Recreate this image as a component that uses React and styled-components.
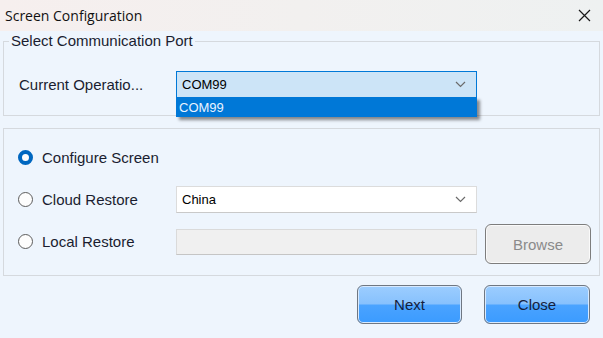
import React from 'react'
import styled, { createGlobalStyle } from 'styled-components'

const GlobalStyle = createGlobalStyle`
    html, body {
        margin: 0;
        padding: 0;
        width: 603px;
        height: 338px;
        overflow: hidden;
        background: #eef5fd;
    }
    * {
        box-sizing: border-box;
    }
`;

const Window = styled.div`
    width: 603px;
    height: 338px;
    display: flex;
    flex-direction: column;
    background: #eef5fd;
    font-family: "Liberation Sans", Arial, sans-serif;
    color: #1a1d30;
`;

const TitleBar = styled.div`
    height: 31px;
    flex: 0 0 31px;
    display: flex;
    align-items: center;
    justify-content: space-between;
    padding: 0 12px 0 5px;
    background: linear-gradient(90deg, #f6efee 0%, #f2f0ef 50%, #eef1f1 100%);
    font-family: "Segoe UI", "Open Sans", "Liberation Sans", sans-serif;
    font-size: 14px;
    color: #111;
`;

const CloseX = styled.svg`
    width: 13px;
    height: 13px;
`;

const Body = styled.div`
    flex: 1;
    display: flex;
    flex-direction: column;
    padding: 1px 3px 0 3px;
`;

const Group = styled.fieldset`
    margin: ${p => p.$top}px 0 0 0;
    padding: ${p => p.$pad};
    border: 1px solid #d5d9de;
    border-radius: 0;
    display: flex;
    flex-direction: column;
    gap: ${p => p.$gap || 0}px;
    position: relative;
`;

const Legend = styled.legend`
    padding: 0 2px;
    margin-left: 0;
    font-size: 15px;
    line-height: 18px;
    color: #1a1d30;
`;

const Row = styled.div`
    display: flex;
    align-items: center;
    height: 27px;
`;

const Label = styled.div`
    width: ${p => p.$w}px;
    font-size: 15px;
    white-space: nowrap;
`;

const RadioLabel = styled.label`
    width: 158px;
    display: flex;
    align-items: center;
    gap: 9px;
    font-size: 15px;
`;

const Radio = styled.span`
    width: 15px;
    height: 15px;
    border-radius: 50%;
    flex: 0 0 15px;
    border: ${p => (p.$on ? '4px solid #0067c0' : '1px solid #5c5c5c')};
    background: #fdfdfd;
`;

const ComboBox = styled.div`
    position: relative;
    width: 301px;
    height: 27px;
    display: flex;
    align-items: center;
    justify-content: space-between;
    padding: 0 10px 0 5px;
    font-size: 13px;
    color: #000;
    background: ${p => (p.$focus ? '#cce4f7' : '#ffffff')};
    border: 1px solid ${p => (p.$focus ? '#0078d7' : '#dcdcdc')};
    border-bottom-color: ${p => (p.$focus ? '#0078d7' : '#c9c9c9')};
`;

const Chevron = styled.svg`
    width: 11px;
    height: 7px;
`;

const DropList = styled.div`
    position: absolute;
    left: -1px;
    top: 25px;
    width: 301px;
    height: 20px;
    display: flex;
    align-items: center;
    padding-left: 3px;
    background: #0078d7;
    color: #e8f3ff;
    font-size: 13px;
    box-shadow: 3px 3px 3px rgba(0, 0, 0, 0.45);
    z-index: 2;
`;

const TextField = styled.div`
    width: 301px;
    height: 26px;
    background: #f0f0f0;
    border: 1px solid #dadada;
    border-bottom-color: #c5c5c5;
`;

const Button = styled.button`
    width: ${p => p.$w}px;
    height: ${p => p.$h}px;
    border-radius: 6px;
    border: 1px solid ${p => (p.$blue ? '#6f7782' : '#7d7d7d')};
    font-family: "Liberation Sans", Arial, sans-serif;
    font-size: 15px;
    padding: 0;
    color: ${p => (p.$blue ? '#14213d' : '#8a8a8a')};
    background: ${p =>
        p.$blue
            ? 'linear-gradient(180deg, #9ccdff 0%, #87c1fd 48%, #4aa3ff 52%, #3b9bff 100%)'
            : '#ececec'};
    box-shadow: inset 0 0 0 1px ${p => (p.$blue ? '#d8eaff' : '#fafafa')};
`;

const BrowseButton = styled(Button)`
    margin-left: 8px;
    align-self: flex-start;
    margin-top: -4px;
`;

const Footer = styled.div`
    display: flex;
    justify-content: flex-end;
    gap: 22px;
    margin-top: 9px;
    padding-right: 10px;
`;

const ChevronIcon = () => (
    <Chevron viewBox="0 0 11 7">
        <path d="M1 1 L5.5 5.5 L10 1" fill="none" stroke="#6b6b6b" strokeWidth="1.2" />
    </Chevron>
);

export default function App() {
    return (
        <Window>
            <GlobalStyle />
            <TitleBar>
                <span>Screen Configuration</span>
                <CloseX viewBox="0 0 13 13">
                    <path d="M1 1 L12 12 M12 1 L1 12" stroke="#1a1a1a" strokeWidth="1.2" />
                </CloseX>
            </TitleBar>
            <Body>
                <Group $top={0} $pad="21px 0 17px 5px">
                    <Legend>Select Communication Port</Legend>
                    <Row>
                        <Label $w={167} style={{ paddingLeft: 10 }}>Current Operatio...</Label>
                        <ComboBox $focus>
                            <span>COM99</span>
                            <ChevronIcon />
                            <DropList>COM99</DropList>
                        </ComboBox>
                    </Row>
                </Group>
                <Group $top={12} $pad="15px 0 20px 14px" $gap={15}>
                    <Row>
                        <RadioLabel>
                            <Radio $on />
                            Configure Screen
                        </RadioLabel>
                    </Row>
                    <Row>
                        <RadioLabel>
                            <Radio />
                            Cloud Restore
                        </RadioLabel>
                        <ComboBox>
                            <span>China</span>
                            <ChevronIcon />
                        </ComboBox>
                    </Row>
                    <Row>
                        <RadioLabel>
                            <Radio />
                            Local Restore
                        </RadioLabel>
                        <TextField />
                        <BrowseButton $w={106} $h={40}>Browse</BrowseButton>
                    </Row>
                </Group>
                <Footer>
                    <Button $blue $w={105} $h={39}>Next</Button>
                    <Button $blue $w={106} $h={39}>Close</Button>
                </Footer>
            </Body>
        </Window>
    );
}
